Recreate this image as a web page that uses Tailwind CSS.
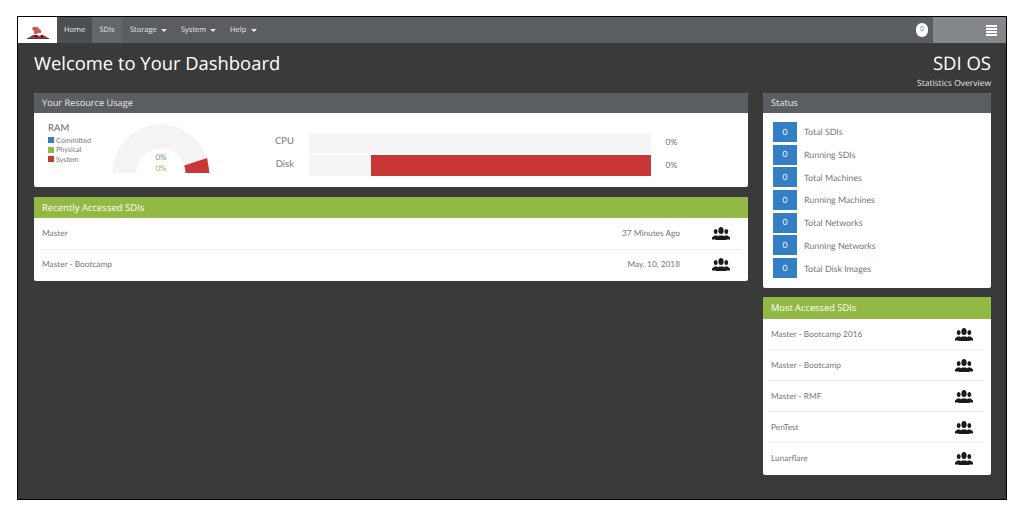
<!DOCTYPE html>
<html lang="en">
<head>
    <meta charset="UTF-8">
    <title>Dashboard</title>
    <script src="https://cdn.jsdelivr.net/npm/@tailwindcss/browser@4"></script>
</head>
<body class="bg-white h-[516px] overflow-hidden font-['Lato',sans-serif] [text-rendering:geometricPrecision]">
    <div class="ml-[17px] mt-[16px] w-[990px] h-[484px] border border-black bg-[#3a3a3a] flex flex-col">
        <!-- navbar -->
        <nav class="flex h-[26px] bg-[#5a5e62] text-[#e8e8e8] text-[7.5px] font-['Open_Sans',sans-serif] items-stretch shrink-0">
            <div class="w-[39px] bg-white flex items-end justify-center pb-[3px]">
                <svg width="22" height="13" viewBox="0 0 22 13">
                    <path d="M6 0h5l1 2 2 1v3h-3l-1 1H7V4L5 2z" fill="#d2555a"/>
                    <path d="M1 11l5-3h4l2 1 3-1 3 1 3 2z" fill="#b92b30"/>
                    <path d="M0 11h22v1H0z" fill="#444"/>
                    <circle cx="9" cy="9" r="1.200" fill="#222"/>
                    <circle cx="15" cy="9" r="1.200" fill="#222"/>
                </svg>
            </div>
            <a class="w-[35px] pt-[1px] bg-[#4b4f52] flex items-center justify-center">Home</a>
            <a class="w-[30px] pt-[1px] bg-[#62676a] flex items-center justify-center">SDIs</a>
            <a class="ml-[8px] w-[51px] pt-[1px] flex items-center gap-[4px]">Storage <span class="border-x-[3px] border-x-transparent border-t-[3px] border-t-[#e8e8e8]"></span></a>
            <a class="w-[49px] pt-[1px] flex items-center gap-[4px]">System <span class="border-x-[3px] border-x-transparent border-t-[3px] border-t-[#e8e8e8]"></span></a>
            <a class="pt-[1px] flex items-center gap-[5px]">Help <span class="border-x-[3px] border-x-transparent border-t-[3px] border-t-[#e8e8e8]"></span></a>
            <div class="ml-auto flex items-center mr-[5px]">
                <span class="w-[12px] h-[14px] rounded-full bg-white text-[#666] text-[7px] flex items-center justify-center">0</span>
            </div>
            <div class="w-[73px] bg-[#84888b] flex items-center justify-end pr-[9px]">
                <div class="w-[11px] flex flex-col gap-[1px]">
                    <span class="h-[2px] bg-white"></span>
                    <span class="h-[2px] bg-white"></span>
                    <span class="h-[2px] bg-white"></span>
                    <span class="h-[2px] bg-white"></span>
                </div>
            </div>
        </nav>

        <!-- page title -->
        <div class="flex justify-between pl-[16px] pr-[15px] h-[50px] text-white font-['Open_Sans',sans-serif] shrink-0">
            <h1 class="text-[18.4px] leading-[28px] mt-[7px]">Welcome to Your Dashboard</h1>
            <div class="text-right mt-[9px]">
                <div class="text-[18.5px] leading-[24px]">SDI OS</div>
                <div class="text-[8.5px] leading-[12px] mt-[2px] text-[#e4e4e4]">Statistics Overview</div>
            </div>
        </div>

        <div class="flex gap-[15px] pl-[16px] pr-[15px] items-start">
            <!-- left column -->
            <div class="w-[714px] flex flex-col gap-[10px]">
                <section class="rounded-[2px] overflow-hidden bg-white">
                    <h2 class="h-[20px] bg-[#5a5e62] text-[#e8e8e8] text-[9.2px] leading-[19px] px-[8px] font-['Open_Sans',sans-serif]">Your Resource Usage</h2>
                    <div class="h-[74px] flex text-[#777]">
                        <div class="w-[75px] pl-[14px] pt-[9px] shrink-0">
                            <div class="text-[9.5px] leading-[12px] text-[#666] pt-[1px]">RAM</div>
                            <ul class="text-[7.2px] leading-[9.5px] mt-[0.5px]">
                                <li class="flex items-center gap-[2px]"><span class="w-[6px] h-[6px] bg-[#337ec5]"></span>Committed</li>
                                <li class="flex items-center gap-[2px]"><span class="w-[6px] h-[6px] bg-[#92b944]"></span>Physical</li>
                                <li class="flex items-center gap-[2px]"><span class="w-[6px] h-[6px] bg-[#c93636]"></span>System</li>
                            </ul>
                        </div>
                        <div class="relative w-[100px] h-[60px] shrink-0 ml-[2px]">
                            <svg width="100" height="60" viewBox="0 0 100 60">
                                <path d="M1.5 60a48.500 48.500 0 0 1 97 0H74.500a24.500 24.500 0 0 0-49 0z" fill="#f4f4f4"/>
                                <path d="M96.100 45 98.500 60H74.500a24.500 24.500 0 0 0-1.200-7.500z" fill="#c93636"/>
                            </svg>
                            <div class="absolute left-0 right-0 top-[39px] text-center text-[8px] leading-[10.5px]">
                                <div class="text-[#6f8fb5]">0%</div>
                                <div class="text-[#9dbb5e]">0%</div>
                            </div>
                        </div>
                        <div class="ml-[55px] w-[35px] pt-[19px] text-[9.5px] text-right flex flex-col shrink-0">
                            <span class="h-[23px] leading-[20px] pr-[7px]">CPU</span>
                            <span class="h-[23px] leading-[20px] pr-[7px]">Disk</span>
                        </div>
                        <div class="ml-[7.5px] w-[342px] pt-[21px] flex flex-col gap-[2px] shrink-0">
                            <div class="h-[19px] bg-[#f5f5f5]"></div>
                            <div class="h-[21px] bg-[#f5f5f5] flex justify-end">
                                <div class="w-[280px] bg-[#c93636]"></div>
                            </div>
                        </div>
                        <div class="ml-[15px] pt-[19px] text-[8.5px] flex flex-col">
                            <span class="h-[23px] leading-[20px]">0%</span>
                            <span class="h-[23px] leading-[20px]">0%</span>
                        </div>
                    </div>
                </section>

                <section class="rounded-[2px] overflow-hidden bg-white">
                    <h2 class="h-[21px] bg-[#92b944] text-white text-[9.5px] leading-[21px] px-[8px] font-['Open_Sans',sans-serif]">Recently Accessed SDIs</h2>
                    <div class="text-[8.3px] text-[#777]">
                        <div class="h-[32px] pb-[2px] flex items-center px-[8px] mx-0 relative">
                            <span>Master</span><span class="ml-auto">37 Minutes Ago</span>
                            <span class="w-[60px] flex justify-end pr-[10px]">
                                <svg width="18" height="13" viewBox="0 0 18 13" fill="#1a1a1a"><ellipse cx="3.700" cy="4.500" rx="1.900" ry="2.600"/><ellipse cx="14.300" cy="4.500" rx="1.900" ry="2.600"/><path d="M0 12.500v-2l2.500-2h2.500l1 1-2.500 3zM18 12.500v-2l-2.500-2H13l-1 1 2.500 3z"/><ellipse cx="9" cy="3.500" rx="2.600" ry="3.500"/><path d="M3.500 13v-2l3.500-2.500h4l3.500 2.500v2z"/></svg>
                            </span>
                            <span class="absolute left-[6px] right-[6px] bottom-0 h-px bg-[#eee]"></span>
                        </div>
                        <div class="h-[31px] pb-[2px] flex items-center px-[8px]">
                            <span>Master - Bootcamp</span><span class="ml-auto">May. 10, 2018</span>
                            <span class="w-[60px] flex justify-end pr-[10px]">
                                <svg width="18" height="13" viewBox="0 0 18 13" fill="#1a1a1a"><ellipse cx="3.700" cy="4.500" rx="1.900" ry="2.600"/><ellipse cx="14.300" cy="4.500" rx="1.900" ry="2.600"/><path d="M0 12.500v-2l2.500-2h2.500l1 1-2.500 3zM18 12.500v-2l-2.500-2H13l-1 1 2.500 3z"/><ellipse cx="9" cy="3.500" rx="2.600" ry="3.500"/><path d="M3.500 13v-2l3.500-2.500h4l3.500 2.500v2z"/></svg>
                            </span>
                        </div>
                    </div>
                </section>
            </div>

            <!-- right column -->
            <div class="w-[228px] flex flex-col gap-[9px]">
                <section class="rounded-[2px] overflow-hidden bg-white">
                    <h2 class="h-[20px] bg-[#5a5e62] text-[#e8e8e8] text-[9.2px] leading-[19px] px-[8px] font-['Open_Sans',sans-serif]">Status</h2>
                    <ul class="h-[175px] pt-[9px] pl-[10px] flex flex-col gap-[2.7px] text-[8.8px] text-[#777]">
                        <li class="flex items-center h-[20px]"><span class="w-[24px] h-[20px] bg-[#337ec5] text-white text-[8.5px] flex items-center justify-center mr-[7px]">0</span>Total SDIs</li>
                        <li class="flex items-center h-[20px]"><span class="w-[24px] h-[20px] bg-[#337ec5] text-white text-[8.5px] flex items-center justify-center mr-[7px]">0</span>Running SDIs</li>
                        <li class="flex items-center h-[20px]"><span class="w-[24px] h-[20px] bg-[#337ec5] text-white text-[8.5px] flex items-center justify-center mr-[7px]">0</span>Total Machines</li>
                        <li class="flex items-center h-[20px]"><span class="w-[24px] h-[20px] bg-[#337ec5] text-white text-[8.5px] flex items-center justify-center mr-[7px]">0</span>Running Machines</li>
                        <li class="flex items-center h-[20px]"><span class="w-[24px] h-[20px] bg-[#337ec5] text-white text-[8.5px] flex items-center justify-center mr-[7px]">0</span>Total Networks</li>
                        <li class="flex items-center h-[20px]"><span class="w-[24px] h-[20px] bg-[#337ec5] text-white text-[8.5px] flex items-center justify-center mr-[7px]">0</span>Running Networks</li>
                        <li class="flex items-center h-[20px]"><span class="w-[24px] h-[20px] bg-[#337ec5] text-white text-[8.5px] flex items-center justify-center mr-[7px]">0</span>Total Disk Images</li>
                    </ul>
                </section>

                <section class="rounded-[2px] overflow-hidden bg-white">
                    <h2 class="h-[22px] bg-[#92b944] text-white text-[9.3px] leading-[21px] px-[8px] font-['Open_Sans',sans-serif]">Most Accessed SDIs</h2>
                    <div class="text-[8.3px] text-[#777]">
                        <div class="h-[31px] pb-[1px] flex items-center justify-between pl-[8px] pr-[18px] relative">
                            <span>Master - Bootcamp 2016</span>
                            <svg width="18" height="13" viewBox="0 0 18 13" fill="#1a1a1a"><ellipse cx="3.700" cy="4.500" rx="1.900" ry="2.600"/><ellipse cx="14.300" cy="4.500" rx="1.900" ry="2.600"/><path d="M0 12.500v-2l2.500-2h2.500l1 1-2.500 3zM18 12.500v-2l-2.500-2H13l-1 1 2.500 3z"/><ellipse cx="9" cy="3.500" rx="2.600" ry="3.500"/><path d="M3.500 13v-2l3.500-2.500h4l3.500 2.500v2z"/></svg>
                            <span class="absolute left-[5px] right-[7px] bottom-0 h-px bg-[#eee]"></span>
                        </div>
                        <div class="h-[31px] pb-[1px] flex items-center justify-between pl-[8px] pr-[18px] relative">
                            <span>Master - Bootcamp</span>
                            <svg width="18" height="13" viewBox="0 0 18 13" fill="#1a1a1a"><ellipse cx="3.700" cy="4.500" rx="1.900" ry="2.600"/><ellipse cx="14.300" cy="4.500" rx="1.900" ry="2.600"/><path d="M0 12.500v-2l2.500-2h2.500l1 1-2.500 3zM18 12.500v-2l-2.500-2H13l-1 1 2.500 3z"/><ellipse cx="9" cy="3.500" rx="2.600" ry="3.500"/><path d="M3.500 13v-2l3.500-2.500h4l3.500 2.500v2z"/></svg>
                            <span class="absolute left-[5px] right-[7px] bottom-0 h-px bg-[#eee]"></span>
                        </div>
                        <div class="h-[31px] pb-[1px] flex items-center justify-between pl-[8px] pr-[18px] relative">
                            <span>Master - RMF</span>
                            <svg width="18" height="13" viewBox="0 0 18 13" fill="#1a1a1a"><ellipse cx="3.700" cy="4.500" rx="1.900" ry="2.600"/><ellipse cx="14.300" cy="4.500" rx="1.900" ry="2.600"/><path d="M0 12.500v-2l2.500-2h2.500l1 1-2.500 3zM18 12.500v-2l-2.500-2H13l-1 1 2.500 3z"/><ellipse cx="9" cy="3.500" rx="2.600" ry="3.500"/><path d="M3.500 13v-2l3.500-2.500h4l3.500 2.500v2z"/></svg>
                            <span class="absolute left-[5px] right-[7px] bottom-0 h-px bg-[#eee]"></span>
                        </div>
                        <div class="h-[31px] pb-[1px] flex items-center justify-between pl-[8px] pr-[18px] relative">
                            <span>PenTest</span>
                            <svg width="18" height="13" viewBox="0 0 18 13" fill="#1a1a1a"><ellipse cx="3.700" cy="4.500" rx="1.900" ry="2.600"/><ellipse cx="14.300" cy="4.500" rx="1.900" ry="2.600"/><path d="M0 12.500v-2l2.500-2h2.500l1 1-2.500 3zM18 12.500v-2l-2.500-2H13l-1 1 2.500 3z"/><ellipse cx="9" cy="3.500" rx="2.600" ry="3.500"/><path d="M3.500 13v-2l3.500-2.500h4l3.500 2.500v2z"/></svg>
                            <span class="absolute left-[5px] right-[7px] bottom-0 h-px bg-[#eee]"></span>
                        </div>
                        <div class="h-[32px] pb-[1px] flex items-center justify-between pl-[8px] pr-[18px]">
                            <span>Lunarflare</span>
                            <svg width="18" height="13" viewBox="0 0 18 13" fill="#1a1a1a"><ellipse cx="3.700" cy="4.500" rx="1.900" ry="2.600"/><ellipse cx="14.300" cy="4.500" rx="1.900" ry="2.600"/><path d="M0 12.500v-2l2.500-2h2.500l1 1-2.500 3zM18 12.500v-2l-2.500-2H13l-1 1 2.500 3z"/><ellipse cx="9" cy="3.500" rx="2.600" ry="3.500"/><path d="M3.500 13v-2l3.500-2.500h4l3.500 2.500v2z"/></svg>
                        </div>
                    </div>
                </section>
            </div>
        </div>
    </div>
</body>
</html>
